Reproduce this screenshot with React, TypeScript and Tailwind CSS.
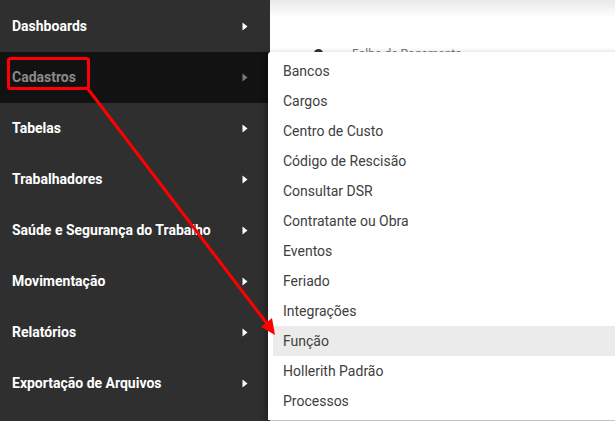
import React from 'react';

const sideItems = [
  'Dashboards',
  'Cadastros',
  'Tabelas',
  'Trabalhadores',
  'Saúde e Segurança do Trabalho',
  'Movimentação',
  'Relatórios',
  'Exportação de Arquivos',
];

const subItems = [
  'Bancos',
  'Cargos',
  'Centro de Custo',
  'Código de Rescisão',
  'Consultar DSR',
  'Contratante ou Obra',
  'Eventos',
  'Feriado',
  'Integrações',
  'Função',
  'Hollerith Padrão',
  'Processos',
];

const Caret: React.FC<{ muted?: boolean }> = ({ muted }) => (
  <svg width="6" height="9" viewBox="0 0 6 9" className={muted ? 'fill-[#7a7a7a]' : 'fill-white'}>
    <path d="M0.5 0.5 L5.5 4.5 L0.5 8.5 Z" />
  </svg>
);

const App: React.FC = () => {
  return (
    <div className="relative flex h-[421px] w-[615px] overflow-hidden bg-white" style={{ fontFamily: 'Roboto, "Liberation Sans", sans-serif' }}>
      <nav className="flex w-[270px] shrink-0 flex-col bg-[#2f2f2f] pt-[1px]">
        {sideItems.map((item) => {
          const active = item === 'Cadastros';
          return (
            <div
              key={item}
              className={`flex h-[51px] shrink-0 items-center justify-between pl-[12px] pr-[22px] ${active ? 'bg-[#121212]' : ''}`}
            >
              <span className={`text-[14px] font-bold ${active ? 'text-[#8a8a8a]' : 'text-white'}`}>{item}</span>
              <Caret muted={active} />
            </div>
          );
        })}
      </nav>

      <main className="flex flex-1 flex-col">
        <div className="h-[18px] bg-linear-to-b from-[#e9e9e9] to-white" />
        <div className="mt-[27px] flex items-center pl-[44px] text-[12px] text-[#777]">
          <span className="h-[11px] w-[9px] rounded-full bg-[#333]" />
          <span className="ml-[29px]">Folha de Pagamento ›</span>
        </div>
      </main>

      {/* submenu popover */}
      <div className="absolute left-[268px] top-[52px] w-[360px] rounded-tl-[3px] bg-white py-[4px] pl-[5px] shadow-[-2px_2px_6px_rgba(0,0,0,0.35)]">
        {subItems.map((item) => (
          <div
            key={item}
            className={`flex h-[30px] items-center pl-[10px] text-[14px] text-[#404040] ${item === 'Função' ? 'bg-[#ebebeb]' : ''}`}
          >
            {item}
          </div>
        ))}
      </div>

      {/* annotation */}
      <svg className="pointer-events-none absolute left-0 top-0" width="615" height="421">
        <rect x="8.5" y="58.5" width="80" height="30" rx="2" fill="none" stroke="#ff0000" strokeWidth="3" />
        <line x1="88" y1="89" x2="268" y2="325" stroke="#ff0000" strokeWidth="3" />
        <polygon points="275,335 261,327 272,318" fill="#ff0000" />
      </svg>
    </div>
  );
};

export default App;
